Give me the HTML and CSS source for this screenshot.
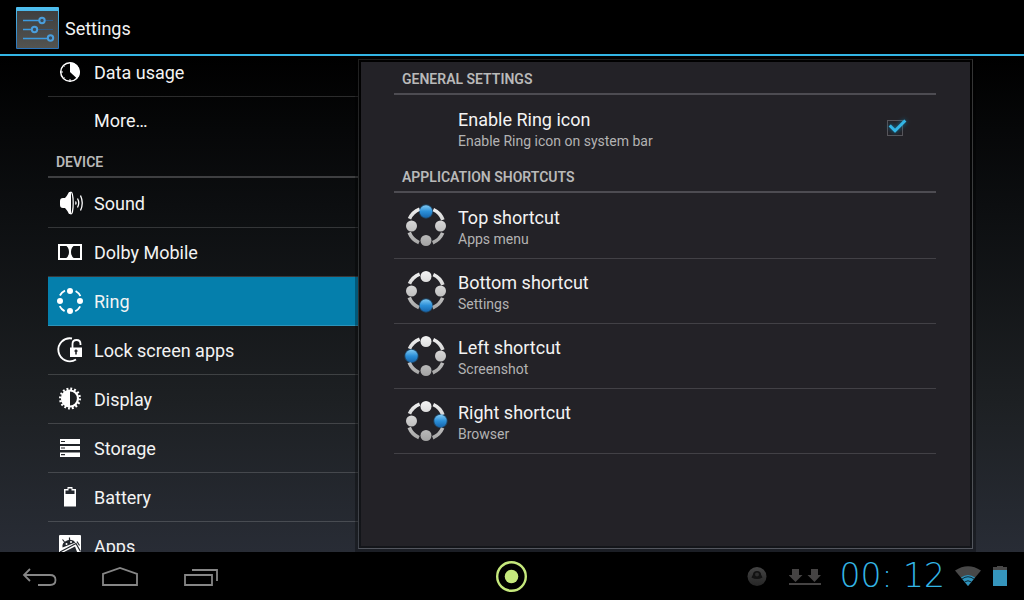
FILE: index.html
```html
<!DOCTYPE html>
<html lang="en">
<head>
  <meta charset="UTF-8">
  <title>Settings</title>
  <meta name="viewport" content="width=device-width, initial-scale=1.0">
  <link rel="stylesheet" href="styles.css">
</head>
<body>

  <header class="action-bar">
    <svg class="app-icon" width="43" height="43" viewBox="0 0 43 43">
      <defs>
        <linearGradient id="tile" x1="0" y1="0" x2="0" y2="1">
          <stop offset="0" stop-color="#3f3f3f"/>
          <stop offset="1" stop-color="#535350"/>
        </linearGradient>
        <linearGradient id="edge" x1="0" y1="0" x2="0" y2="1">
          <stop offset="0" stop-color="#4fc0f0"/>
          <stop offset="1" stop-color="#2a72b8"/>
        </linearGradient>
      </defs>
      <rect width="43" height="42" rx="1" fill="url(#edge)"/>
      <rect x="1" y="4" width="41" height="37" fill="url(#tile)"/>
      <g fill="none" stroke="#2f5a86" stroke-width="1.2">
        <path d="M29 13.5h8M22 22.5h15"/>
      </g>
      <g fill="none" stroke="#3d9be0" stroke-width="1.6">
        <path d="M7 13.5h16M7 22.5h9M7 31.5h24"/>
      </g>
      <g fill="#3c4a58" stroke="#4a9edc" stroke-width="2">
        <circle cx="26" cy="13.5" r="2.7"/>
        <circle cx="18.5" cy="22.5" r="2.7"/>
        <circle cx="34.5" cy="31" r="2.7"/>
      </g>
    </svg>
    <h1>Settings</h1>
  </header>

  <main class="content">

    <nav class="sidebar">
      <div class="sidebar-list">
        <a class="item" href="#data">
          <svg width="28" height="28" viewBox="0 0 28 28">
            <circle cx="14" cy="14" r="9.3" fill="none" stroke="#fff" stroke-width="1.5"/>
            <path d="M14 14V4.5a9.5 9.5 0 0 1 7 16z" fill="#fff"/>
            <path d="M4 14h3M14 21v3M7 7l1.5 1.5M7 21l1.5-1.5" stroke="#fff"/>
          </svg>
          <span>Data usage</span>
        </a>
        <a class="item item-last" href="#more">
          <svg width="28" height="28" viewBox="0 0 28 28"></svg>
          <span>More…</span>
        </a>

        <h2>DEVICE</h2>

        <a class="item" href="#sound">
          <svg width="28" height="28" viewBox="0 0 28 28">
            <path d="M4 12q0-3 3-3h2q2-2 4-6h2v22h-2q-2-4-4-6H7q-3 0-3-3z" fill="#fff"/>
            <ellipse cx="15" cy="14" rx="2.2" ry="11" fill="none" stroke="#fff" stroke-width="1.2"/>
            <g fill="none" stroke="#fff" stroke-width="1.3">
              <path d="M19.500 12.500q1 1.500 0 3M21.500 9.500q2.500 4.500 0 9M24.500 6.500q3.500 7.500 0 15"/>
            </g>
          </svg>
          <span>Sound</span>
        </a>
        <a class="item" href="#dolby">
          <svg width="28" height="28" viewBox="0 0 28 28">
            <rect x="3" y="7" width="22" height="14" fill="none" stroke="#fff" stroke-width="2"/>
            <path d="M9 7q4 2 4 7t-4 7h10q-4-2-4-7t4-7z" fill="#fff"/>
          </svg>
          <span>Dolby Mobile</span>
        </a>
        <a class="item active" href="#ring">
          <svg width="28" height="28" viewBox="0 0 28 28">
            <circle cx="14" cy="14" r="11.5" fill="none" stroke="#fff" stroke-width="1.8" stroke-dasharray="7.06 11" stroke-dashoffset="-5.5"/>
            <g fill="#fff">
              <circle cx="14" cy="4" r="3"/>
              <circle cx="24" cy="14" r="3"/>
              <circle cx="14" cy="24" r="3"/>
              <circle cx="4" cy="14" r="3"/>
            </g>
          </svg>
          <span>Ring</span>
        </a>
        <a class="item" href="#lock">
          <svg width="28" height="28" viewBox="0 0 28 28">
            <path d="M16 2.500A11.500 11.500 0 1 0 20 23.500" fill="none" stroke="#fff" stroke-width="1.9"/>
            <path d="M16.500 12V8q0-4 4-4t4 4v1" fill="none" stroke="#fff" stroke-width="1.8"/>
            <rect x="14" y="11.500" width="12" height="9.500" fill="#fff"/>
            <path d="M20 13.500v5M18.500 15h3" stroke="#1a1c20" stroke-width="1.5"/>
          </svg>
          <span>Lock screen apps</span>
        </a>
        <a class="item" href="#display">
          <svg width="28" height="28" viewBox="0 0 28 28">
            <circle cx="14" cy="13.500" r="9.800" fill="none" stroke="#fff" stroke-width="2.4" stroke-dasharray="1.9 1.95"/>
            <circle cx="14" cy="13.500" r="8" fill="none" stroke="#fff" stroke-width="2.2"/>
            <path d="M14 5.500a8 8 0 0 0 0 16z" fill="#fff"/>
          </svg>
          <span>Display</span>
        </a>
        <a class="item" href="#storage">
          <svg width="28" height="28" viewBox="0 0 28 28">
            <path d="M4 5h20v5H4zM4 12h20v4H4zM4 18.500h20v4.500H4z" fill="#fff"/>
            <path d="M5 7.500h4M5 14h4M5 20.700h4" stroke="#24272b" stroke-width="1.2"/>
          </svg>
          <span>Storage</span>
        </a>
        <a class="item" href="#battery">
          <svg width="28" height="28" viewBox="0 0 28 28">
            <path d="M8 23.500V6h3.500V4h5v2H20v17.500zM9.500 11h9V7.500H15.500V5.500h-3v2h-3z" fill="#fff" fill-rule="evenodd"/>
          </svg>
          <span>Battery</span>
        </a>
        <a class="item" href="#apps">
          <svg width="28" height="28" viewBox="0 0 28 28">
            <rect x="3" y="3" width="22" height="22" rx="1" fill="#fff"/>
            <path d="M6.500 15.500q-1-5 4.500-7t8.500 2z" fill="#23272d"/>
            <path d="M8.500 10L6.500 7.500M13.500 8V5.500M4 20L20 11.500l4.500 8M21 9.500l2.500 4" stroke="#23272d" stroke-width="1.2" fill="none"/>
            <path d="M7 20.500l12-6 3 8H7z" fill="#23272d"/>
            <circle cx="10.500" cy="12" r="1" fill="#fff"/>
            <circle cx="15" cy="10" r="1" fill="#fff"/>
          </svg>
          <span>Apps</span>
        </a>
      </div>
    </nav>

    <section class="panel">
      <div class="panel-body">
        <h2>GENERAL SETTINGS</h2>
        <label class="pref pref-last" for="ring-icon">
          <span class="pref-icon"></span>
          <span class="pref-text">
            <span class="pref-title">Enable Ring icon</span>
            <span class="pref-summary">Enable Ring icon on system bar</span>
          </span>
          <input type="checkbox" id="ring-icon" checked>
        </label>

        <h2>APPLICATION SHORTCUTS</h2>
        <a class="pref" href="#top">
          <svg class="pref-icon" viewBox="0 0 48 48">
            <defs>
              <linearGradient id="silver" gradientUnits="userSpaceOnUse" x1="0" y1="4" x2="0" y2="44">
                <stop offset="0" stop-color="#f4f4f4"/>
                <stop offset="1" stop-color="#a2a2a2"/>
              </linearGradient>
              <linearGradient id="blue" x1="0" y1="0" x2="0" y2="1">
                <stop offset="0" stop-color="#7fc8f2"/>
                <stop offset="0.5" stop-color="#2b8fd8"/>
                <stop offset="1" stop-color="#1766ad"/>
              </linearGradient>
              <g id="ring-base" fill="url(#silver)">
                <circle cx="24" cy="24" r="18" fill="none" stroke="url(#silver)" stroke-width="3.6" stroke-dasharray="14.27 14" stroke-dashoffset="-7"/>
                <circle cx="24" cy="9.500" r="5.500"/>
                <circle cx="38.500" cy="24" r="5.500"/>
                <circle cx="24" cy="38.500" r="5.500"/>
                <circle cx="9.500" cy="24" r="5.500"/>
              </g>
              <g id="dot">
                <circle r="7.2" fill="#1b7cc4" opacity="0.4"/>
                <circle r="6.2" fill="url(#blue)"/>
              </g>
            </defs>
            <use href="#ring-base"/>
            <use href="#dot" x="24" y="9.500"/>
          </svg>
          <span class="pref-text">
            <span class="pref-title">Top shortcut</span>
            <span class="pref-summary">Apps menu</span>
          </span>
        </a>
        <a class="pref" href="#bottom">
          <svg class="pref-icon" viewBox="0 0 48 48">
            <use href="#ring-base"/>
            <use href="#dot" x="24" y="38.500"/>
          </svg>
          <span class="pref-text">
            <span class="pref-title">Bottom shortcut</span>
            <span class="pref-summary">Settings</span>
          </span>
        </a>
        <a class="pref" href="#left">
          <svg class="pref-icon" viewBox="0 0 48 48">
            <use href="#ring-base"/>
            <use href="#dot" x="9.500" y="24"/>
          </svg>
          <span class="pref-text">
            <span class="pref-title">Left shortcut</span>
            <span class="pref-summary">Screenshot</span>
          </span>
        </a>
        <a class="pref" href="#right">
          <svg class="pref-icon" viewBox="0 0 48 48">
            <use href="#ring-base"/>
            <use href="#dot" x="38.500" y="24"/>
          </svg>
          <span class="pref-text">
            <span class="pref-title">Right shortcut</span>
            <span class="pref-summary">Browser</span>
          </span>
        </a>
      </div>
    </section>

  </main>

  <footer class="system-bar">
    <div class="nav-buttons">
      <button aria-label="Back">
        <svg width="36" height="24" viewBox="0 0 36 24">
          <path d="M2 11h26q5.500 0 5.500 5t-5.500 5H16M8 5l-6 6 6 6" fill="none" stroke="#868686" stroke-width="1.8"/>
        </svg>
      </button>
      <button aria-label="Home">
        <svg width="36" height="24" viewBox="0 0 36 24">
          <path d="M1 21V10l17-6 17 6v11z" fill="none" stroke="#868686" stroke-width="1.8"/>
        </svg>
      </button>
      <button aria-label="Recent apps">
        <svg width="36" height="24" viewBox="0 0 36 24">
          <path d="M3 11h27v10H3zM10 6h25v11" fill="none" stroke="#868686" stroke-width="1.8"/>
        </svg>
      </button>
    </div>

    <button class="ring-button" aria-label="Ring">
      <svg width="32" height="32" viewBox="0 0 32 32">
        <circle cx="15.500" cy="16.500" r="14.300" fill="none" stroke="#c5e87c" stroke-width="2.4"/>
        <circle cx="15.500" cy="16.500" r="6.800" fill="#c5e87c"/>
      </svg>
    </button>

    <div class="status">
      <svg width="20" height="20" viewBox="0 0 20 20">
        <defs>
          <linearGradient id="disc" x1="0" y1="0" x2="0" y2="1">
            <stop offset="0" stop-color="#444"/>
            <stop offset="1" stop-color="#262626"/>
          </linearGradient>
        </defs>
        <circle cx="10" cy="10.500" r="9.500" fill="url(#disc)"/>
        <path d="M6 8.500q0-3.500 4-3.500t4 3.500l1.500 3q-5.500 3-11 0z" fill="#131313"/>
        <circle cx="10" cy="8.500" r="2" fill="#2e2e2e"/>
      </svg>
      <svg width="32" height="20" viewBox="0 0 32 20">
        <path d="M3 3h7v6h3.500L6.500 16-.5 9H3zM22 3h7v6h3L25.500 16l-7-7H22zM0 17h32v2H0z" fill="#454343"/>
      </svg>
      <time class="clock">00: 12</time>
      <svg class="wifi" width="26" height="20" viewBox="0 0 26 20">
        <path d="M0 4.500Q13-4 26 4.500L13 20z" fill="#484848"/>
        <path d="M6 11.500q7-5 14 0L13 20z" fill="#2e93bd"/>
        <path d="M7 13q6-4.500 12 0M9.500 16q3.500-2.500 7 0" fill="none" stroke="#0c2a36" stroke-width="1"/>
      </svg>
      <svg width="14" height="20" viewBox="0 0 14 20">
        <path d="M0 1h4V0h6v1h4v4H0z" fill="#484848"/>
        <path d="M0 4h14v16H0z" fill="#3595bd"/>
      </svg>
    </div>
  </footer>

</body>
</html>
```
FILE: styles.css
```css
* {
  margin: 0;
  box-sizing: border-box;
  font-family: Roboto, "Noto Sans", sans-serif;
}

body {
  display: flex;
  flex-direction: column;
  height: 100vh;
  overflow: hidden;
  background-color: #000;
  color: #f3f3f3;
}

a {
  color: inherit;
  text-decoration: none;
}

svg {
  display: block;
  flex: none;
}

h2 {
  height: 33px;
  margin-bottom: 1px;
  padding: 0 8px;
  border-bottom: 2px solid #4d4c52;
  color: #b9b9b9;
  font-size: 14px;
  font-weight: 600;
  line-height: 35px;
}

/* Action bar */
.action-bar {
  display: flex;
  align-items: center;
  flex: none;
  gap: 6px;
  height: 56px;
  padding: 2px 16px 0;
  border-bottom: 2px solid #33b5e5;
}

.action-bar h1 {
  font-size: 18px;
  font-weight: normal;
}

/* Two pane content */
.content {
  display: flex;
  flex: 1;
  min-height: 0;
  padding: 0 51px 0 48px;
  background: linear-gradient(#000, #0c0e10 30%, #1d2023 70%, #282c35);
}

.sidebar {
  flex: 0 0 310px;
  overflow: hidden;
}

/* list is scrolled a little under the action bar */
.sidebar-list {
  margin-top: -8px;
}

.sidebar h2 {
  border-color: #3e3f41;
}

.item {
  display: flex;
  align-items: center;
  gap: 10px;
  height: 49px;
  padding: 0 8px;
  border-bottom: 1px solid rgba(255, 255, 255, 0.16);
  font-size: 18px;
}

.item-last {
  height: 48px;
  padding-bottom: 2px;
  border-bottom: none;
}

.item.active {
  background-color: #057fac;
}

.panel {
  display: flex;
  flex: 1;
  min-width: 0;
  margin: 3px 0;
  padding: 2px;
  border: 1px solid rgba(255, 255, 255, 0.2);
  border-top-color: rgba(255, 255, 255, 0.12);
  border-left-color: rgba(255, 255, 255, 0.12);
  background-color: rgba(0, 0, 0, 0.5);
  background-clip: padding-box;
  box-shadow: 0 0 0 3px rgba(0, 0, 0, 0.3);
}

.panel-body {
  flex: 1;
  min-width: 0;
  padding: 0 34px 0 33px;
  background-color: #232227;
}

.pref {
  display: flex;
  align-items: center;
  gap: 8px;
  height: 65px;
  padding: 0 8px;
  border-bottom: 1px solid #424146;
}

.pref-last {
  height: 64px;
  border-bottom: none;
}

.pref-icon {
  flex: none;
  width: 48px;
  height: 48px;
}

.pref-text {
  display: flex;
  flex: 1;
  flex-direction: column;
  padding-top: 2px;
}

.pref-title {
  font-size: 18px;
  line-height: 24px;
}

.pref-summary {
  color: #b3b3b3;
  font-size: 14px;
  line-height: 19px;
}

.pref input {
  position: relative;
  appearance: none;
  width: 16px;
  height: 16px;
  margin: 0 25px 0 0;
  border: 1px solid #56555a;
}

.pref input:checked::before {
  content: "";
  position: absolute;
  top: -5px;
  left: 5px;
  width: 6px;
  height: 13px;
  border: solid #33b5e5;
  border-width: 0 3px 3px 0;
  transform: rotate(45deg);
  filter: drop-shadow(0 0 2px #0f7299);
}

/* System bar */
.system-bar {
  display: grid;
  grid-template-columns: 1fr auto 1fr;
  align-items: center;
  flex: none;
  height: 48px;
  background-color: #000;
}

.system-bar button {
  display: flex;
  align-items: center;
  justify-content: center;
  height: 48px;
  padding: 0;
  border: none;
  background: none;
  cursor: pointer;
}

.nav-buttons {
  display: flex;
}

.nav-buttons button {
  width: 80px;
}

.status {
  display: flex;
  align-items: center;
  justify-content: flex-end;
  padding-right: 17px;
}

.status svg {
  margin-left: 10px;
}

.status svg + svg {
  margin-left: 22px;
}

.status .wifi + svg {
  margin-left: 12px;
}

.clock {
  margin-left: 18px;
  color: #33b5e5;
  font-family: "DejaVu Sans", sans-serif;
  font-size: 33px;
  font-weight: 200;
  line-height: 48px;
}
```
